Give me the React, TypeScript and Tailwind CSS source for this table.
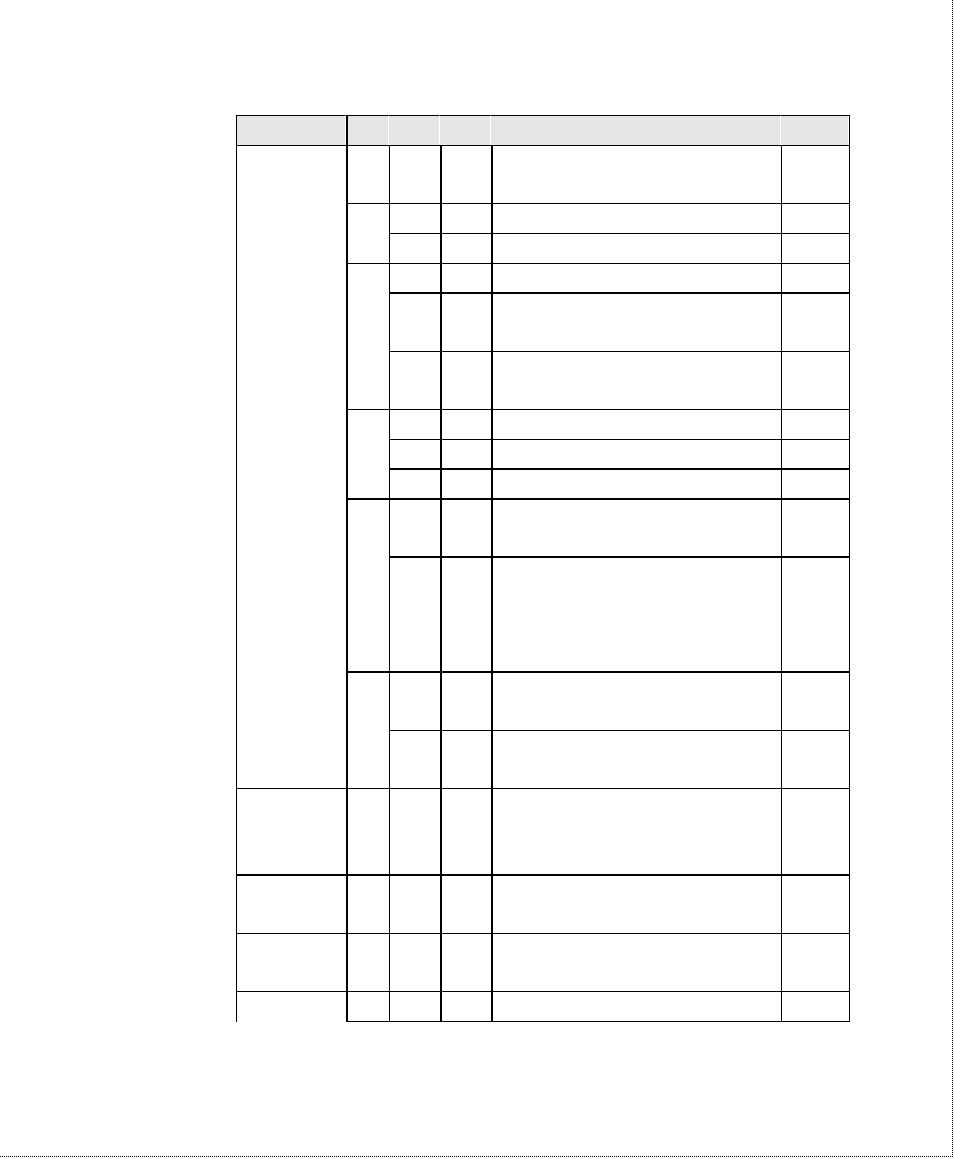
type Cell = {
    cls: string
}

const HEADER = 'bg-[#e5e5e5] border-t border-black'

// row by row; auto-placement fills the gaps left by the row-spans
const CELLS: Cell[] = [
    // header
    { cls: `${HEADER} border-l border-r border-r-white` },
    { cls: `${HEADER} border-l-2 border-r border-r-white` },
    { cls: `${HEADER} border-r border-r-white` },
    { cls: `${HEADER} border-r border-r-white` },
    { cls: `${HEADER} border-r border-r-white` },
    { cls: `${HEADER} border-r header-last` },

    // y145
    { cls: 'row-span-13 border-t border-l' },
    { cls: 'border-t border-l-2' },
    { cls: 'border-t border-l' },
    { cls: 'border-t border-l-2' },
    { cls: 'border-t border-l-2' },
    { cls: 'border-t border-l border-r' },

    // y203
    { cls: 'row-span-2 border-t border-l-2' },
    { cls: 'border-t border-l' },
    { cls: 'border-t border-l-2' },
    { cls: 'border-t border-l-2' },
    { cls: 'border-t border-l border-r' },
    // y233
    { cls: 'border-t border-l' },
    { cls: 'border-t border-l-2' },
    { cls: 'border-t border-l-2' },
    { cls: 'border-t border-l border-r' },

    // y263
    { cls: 'row-span-3 border-t border-l-2' },
    { cls: 'border-t border-l' },
    { cls: 'border-t border-l-2' },
    { cls: 'border-t border-l-2' },
    { cls: 'border-t border-l border-r' },
    // y292
    { cls: 'border-t-2 border-l' },
    { cls: 'border-t-2 border-l-2' },
    { cls: 'border-t-2 border-l-2' },
    { cls: 'border-t-2 border-l border-r' },
    // y351
    { cls: 'border-t border-l' },
    { cls: 'border-t border-l-2' },
    { cls: 'border-t border-l-2' },
    { cls: 'border-t border-l border-r' },

    // y409
    { cls: 'row-span-3 border-t border-l-2' },
    { cls: 'border-t border-l' },
    { cls: 'border-t border-l-2' },
    { cls: 'border-t border-l-2' },
    { cls: 'border-t border-l border-r' },
    // y439
    { cls: 'border-t border-l' },
    { cls: 'border-t border-l-2' },
    { cls: 'border-t border-l-2' },
    { cls: 'border-t border-l border-r' },
    // y468
    { cls: 'border-t-2 border-l' },
    { cls: 'border-t-2 border-l-2' },
    { cls: 'border-t-2 border-l-2' },
    { cls: 'border-t-2 border-l border-r' },

    // y498
    { cls: 'row-span-2 border-t-2 border-l-2' },
    { cls: 'border-t-2 border-l' },
    { cls: 'border-t-2 border-l-2' },
    { cls: 'border-t-2 border-l-2' },
    { cls: 'border-t-2 border-l border-r' },
    // y556
    { cls: 'border-t-2 border-l' },
    { cls: 'border-t-2 border-l-2' },
    { cls: 'border-t-2 border-l-2' },
    { cls: 'border-t-2 border-l border-r' },

    // y671
    { cls: 'row-span-2 border-t-2 border-l-2' },
    { cls: 'border-t-2 border-l' },
    { cls: 'border-t-2 border-l-2' },
    { cls: 'border-t-2 border-l-2' },
    { cls: 'border-t-2 border-l border-r' },
    // y730
    { cls: 'border-t border-l' },
    { cls: 'border-t border-l-2' },
    { cls: 'border-t border-l-2' },
    { cls: 'border-t border-l border-r' },

    // y788
    { cls: 'border-t border-l' },
    { cls: 'border-t border-l-2' },
    { cls: 'border-t border-l' },
    { cls: 'border-t border-l-2' },
    { cls: 'border-t border-l-2' },
    { cls: 'border-t border-l border-r' },
    // y874
    { cls: 'border-t-2 border-l' },
    { cls: 'border-t-2 border-l-2' },
    { cls: 'border-t-2 border-l' },
    { cls: 'border-t-2 border-l-2' },
    { cls: 'border-t-2 border-l-2' },
    { cls: 'border-t-2 border-l border-r' },
    // y933
    { cls: 'border-t border-l' },
    { cls: 'border-t border-l-2' },
    { cls: 'border-t border-l' },
    { cls: 'border-t border-l-2' },
    { cls: 'border-t border-l-2' },
    { cls: 'border-t border-l border-r' },
    // y991, first column stays open at the bottom
    { cls: 'border-t border-l' },
    { cls: 'border-t border-b border-l-2' },
    { cls: 'border-t border-b border-l' },
    { cls: 'border-t border-b border-l-2' },
    { cls: 'border-t border-b border-l-2' },
    { cls: 'border-t border-b border-l border-r' },
]

export default function App() {
    return (
        <div className="w-[953px] h-[1157px] bg-white border-r border-b border-dotted border-black pt-[115px] pl-[236px] font-['Liberation_Sans',sans-serif]">
            <div className="grid w-[614px] grid-cols-[110px_43px_51px_51px_290px_69px] grid-rows-[30px_58px_30px_30px_29px_59px_58px_30px_29px_30px_58px_115px_59px_58px_86px_59px_58px_31px]">
                {CELLS.map((cell, i) =>
                    cell.cls.includes('header-last') ? (
                        <div key={i} className={`${cell.cls} border-black`}>
                            <div className="h-full border-r border-white" />
                        </div>
                    ) : (
                        <div key={i} className={`border-black ${cell.cls}`} />
                    )
                )}
            </div>
        </div>
    )
}
